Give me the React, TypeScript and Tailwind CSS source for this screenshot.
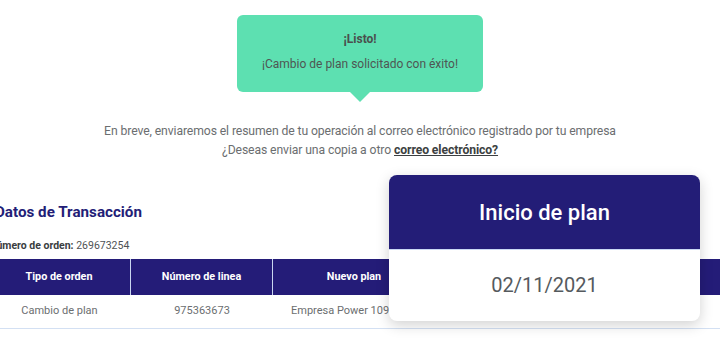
import React from "react";

export default function App() {
  return (
    <div
      className="relative w-[720px] h-[352px] overflow-hidden bg-white"
      style={{ fontFamily: "Roboto, 'Noto Sans', sans-serif" }}
    >
      {/* Toast */}
      <div className="flex justify-center pt-[15px]">
        <div className="relative w-[246px] h-[77px] rounded-[6px] bg-[#5de0b1] flex flex-col items-center pt-[17px]">
          <div className="text-[12px] font-bold text-[#4a4f4d] leading-[14px]">¡Listo!</div>
          <div className="text-[12px] text-[#4f5553] leading-[14px] mt-[11px]">
            ¡Cambio de plan solicitado con éxito!
          </div>
          <div className="absolute left-1/2 -translate-x-1/2 -bottom-[10px] w-0 h-0 border-l-[10px] border-r-[10px] border-t-[10px] border-l-transparent border-r-transparent border-t-[#5de0b1]" />
        </div>
      </div>

      {/* Info text */}
      <div className="mt-[30px] text-center text-[12.2px] leading-[19px] text-[#6b6e70] tracking-[-0.1px]">
        <div>En breve, enviaremos el resumen de tu operación al correo electrónico registrado por tu empresa</div>
        <div>
          ¿Deseas enviar una copia a otro{" "}
          <span className="font-bold text-[#3c3f41] underline">correo electrónico?</span>
        </div>
      </div>

      {/* Transaction data */}
      <div className="ml-[-5px] mt-[42px]">
        <div className="text-[15.2px] font-bold text-[#231d77] leading-[20px]">Datos de Transacción</div>
        <div className="mt-[17px] text-[10.5px] text-[#4f5355] leading-[14px] ml-[-6px]">
          <span className="font-bold text-[#3a3d3f]">Número de orden:</span> 269673254
        </div>
        <div className="mt-[6px] ml-[-7px] w-[760px]">
          <div className="flex h-[36px] bg-[#241c78] text-white text-[10.8px] font-bold items-stretch">
            <div className="w-[143px] flex items-center justify-center border-r border-[#c9d6f0]">Tipo de orden</div>
            <div className="w-[142px] flex items-center justify-center border-r border-[#c9d6f0]">Número de linea</div>
            <div className="w-[162px] flex items-center justify-center">Nuevo plan</div>
            <div className="flex-1" />
          </div>
          <div className="flex h-[34px] text-[11px] text-[#6b6e70] items-center border-b border-[#d3e0f3]">
            <div className="w-[143px] text-center">Cambio de plan</div>
            <div className="w-[142px] text-center">975363673</div>
            <div className="w-[162px] whitespace-nowrap pl-[18px] text-left">Empresa Power 109</div>
          </div>
        </div>
      </div>

      {/* Overlay card */}
      <div className="absolute left-[389px] top-[175px] w-[311px] h-[146px] rounded-[8px] bg-white overflow-hidden shadow-[0_4px_14px_rgba(0,0,0,0.18)] flex flex-col">
        <div className="h-[75px] bg-[#231d77] flex items-center justify-center border-b border-[#c9d9f3]">
          <span className="text-white text-[22px] font-medium">Inicio de plan</span>
        </div>
        <div className="flex-1 flex items-center justify-center pb-[2px]">
          <span className="text-[#555a5e] text-[20px]">02/11/2021</span>
        </div>
      </div>
    </div>
  );
}
